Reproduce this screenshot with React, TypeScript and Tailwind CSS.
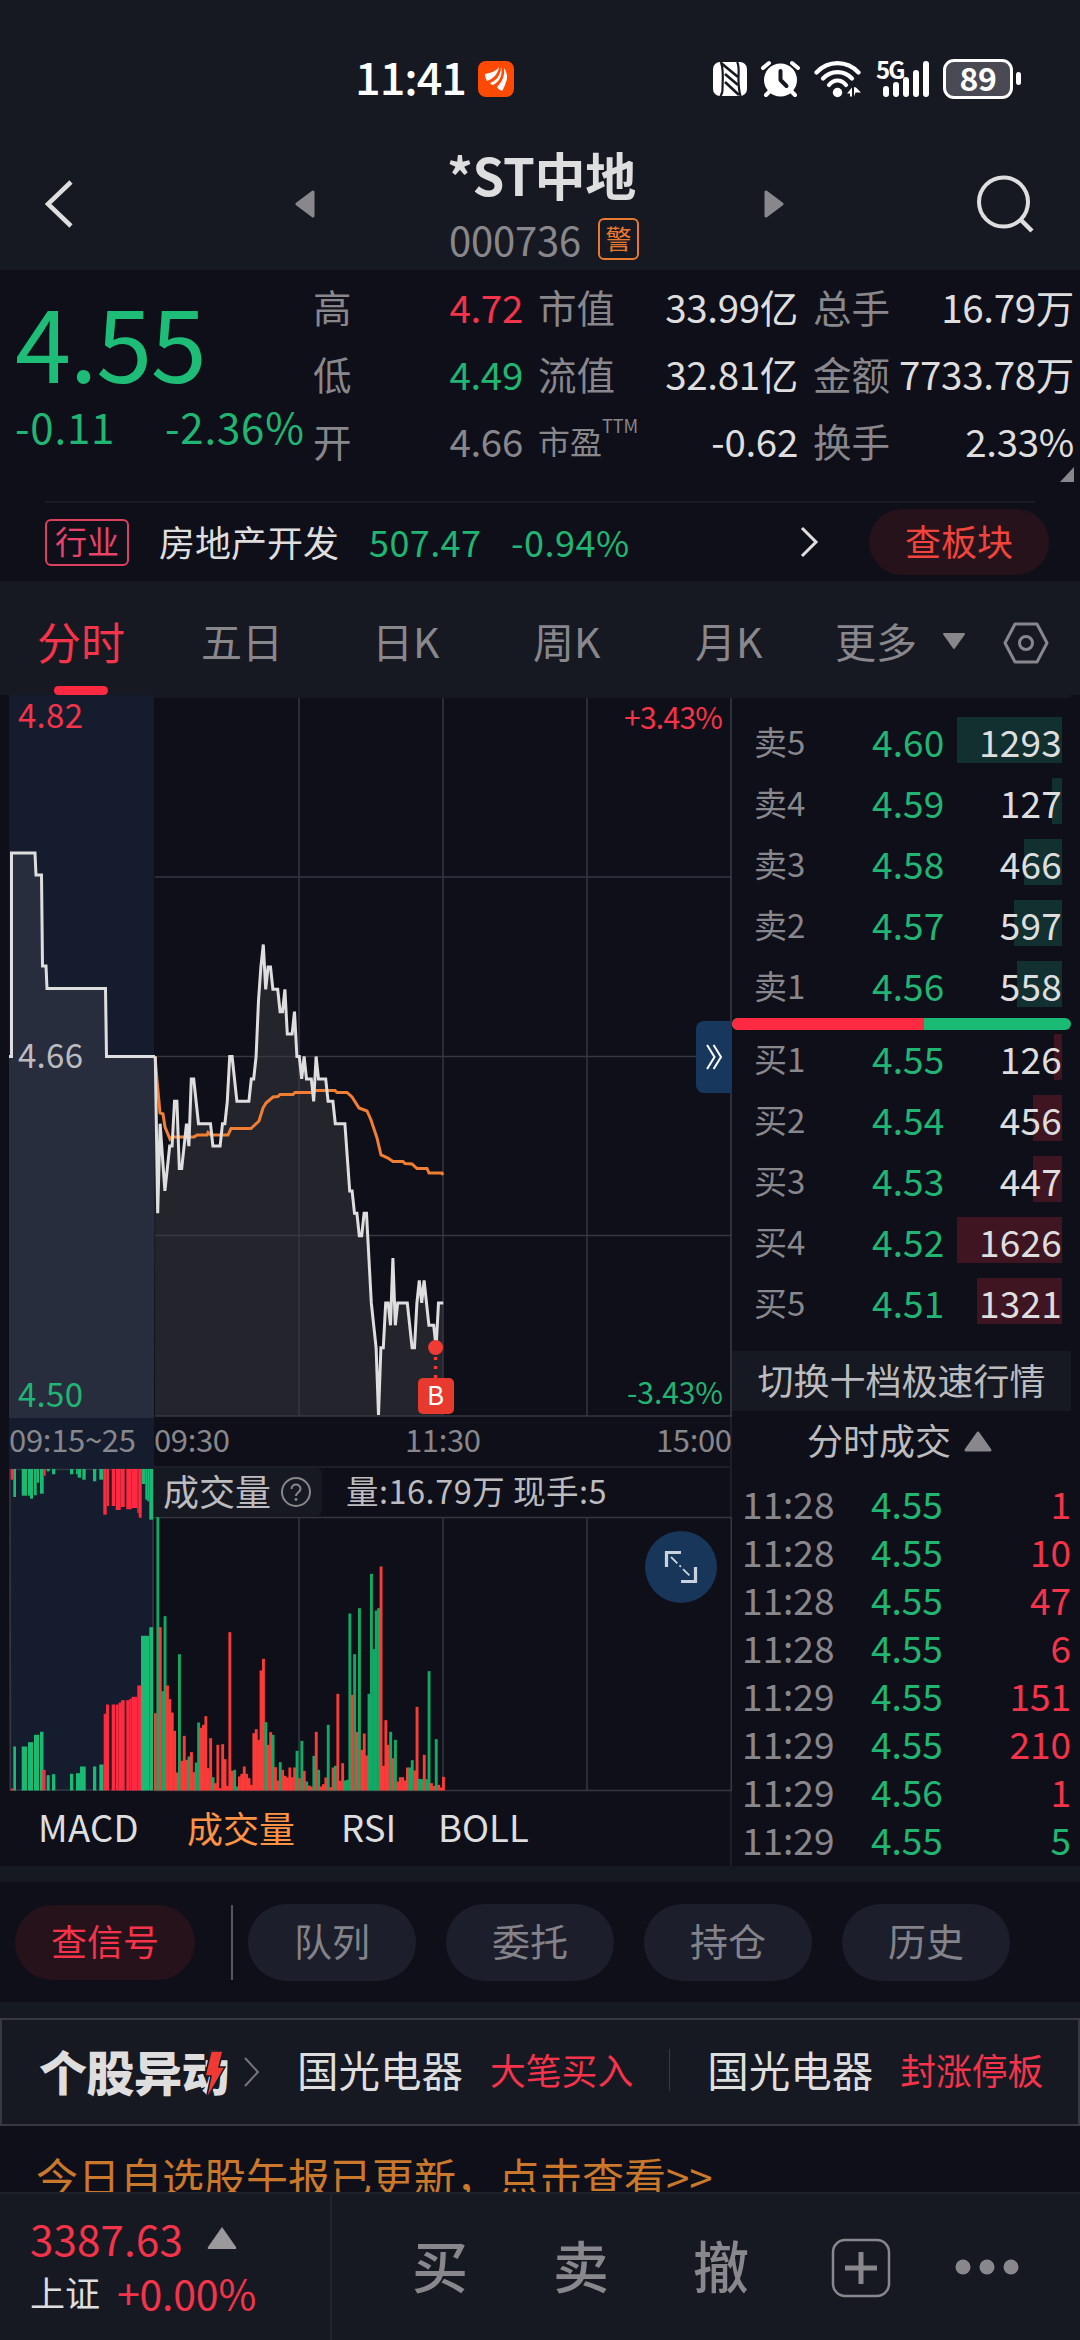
import type { ReactNode } from "react";

const UP = "#f5334a";
const DOWN = "#21b573";

// [minute, price in cents], minute 0 is 09:30
const PRICES: [number, number][] = [
  [0, 466], [1, 459], [2, 463], [4, 460], [6, 462], [7, 462], [8, 464], [9, 464], [10, 461], [11, 461],
  [13, 463], [14, 462], [15, 465], [16, 465], [18, 463], [23, 463], [24, 462], [27, 462], [28, 463], [29, 463],
  [30, 464], [31, 466], [32, 466], [34, 464], [39, 464], [40, 465], [41, 465], [42, 466], [43, 468.5], [44, 470],
  [45, 471], [46, 469], [47, 470], [48, 470], [49, 469], [51, 469], [52, 468], [53, 468], [54, 469], [55, 467],
  [57, 467], [58, 468], [59, 466], [60, 466], [61, 465], [62, 466], [63, 465], [65, 465], [66, 464], [67, 466],
  [68, 465], [71, 465], [72, 464], [74, 464], [75, 463], [79, 463], [81, 460], [82, 460], [83, 459], [84, 459],
  [85, 458], [86, 458], [87, 459], [88, 459], [90, 455], [92, 453], [93, 450], [94, 453], [95, 453], [96, 455],
  [97, 455], [98, 454], [99, 457], [100, 454], [101, 455], [105, 455], [107, 453], [108, 453], [109, 455],
  [110, 456], [111, 455], [112, 456], [114, 454], [116, 454], [117, 453], [118, 455], [120, 455],
];

const AVERAGE: [number, number][] = [
  [155, 1056], [157, 1080], [160, 1113], [163, 1114], [165, 1127], [170, 1139], [172, 1137], [194, 1137], [197, 1135],
  [207, 1135], [208, 1132.5], [211, 1135], [228, 1135], [231, 1128.5], [251, 1128.5], [259, 1121], [263, 1108],
  [266, 1103], [273, 1097], [278, 1096.5], [280, 1094.5], [293, 1094.5], [295, 1092.5], [312, 1092.5], [316, 1090.5],
  [335, 1090.5], [337, 1092.5], [347, 1092.5], [352, 1097], [359, 1108], [367, 1111], [371, 1120], [377, 1138],
  [381, 1155], [388, 1158], [393, 1161.5], [403, 1161.5], [405, 1163.5], [412, 1164], [417, 1168.5], [427, 1168.5],
  [429, 1173], [442, 1173], [443, 1175],
];

// one bar per minute, negative means the price fell
const VOLUMES = [
  232, -820, 490, -298, -523, 315, 274, 234, 179, 54, -409, 89, 164, 92, -102, 115, 55, -84, -204, 188, 197, 223, 67,
  157, -40, 22, 137, 7, 139, 94, 14, 475, 59, -62, -12, 42, 50, 72, 50, 37, 17, 172, 184, 152, 360, 395, -205, 137,
  175, -167, 70, 30, -85, 62, 44, 39, 69, 40, 69, -119, 37, -149, 59, -27, 15, 12, -104, 176, -62, 12, 19, 39, -197,
  10, 69, -74, 290, 29, 82, -30, -32, -531, 287, -409, 176, -547, 122, 171, 105, -290, -650, -424, -540, -547, 672,
  74, 211, 137, -176, 97, -152, 27, 40, 40, 30, 69, -69, -91, 60, 251, -35, -34, 107, -34, -358, 22, 14, -154, 17, 9,
  41,
];

// call auction: [x, width, height], negative height is green
const AUCTION_MATCHED: [number, number, number][] = [
  [10.7, 2.6, 2], [13.3, 2.7, -44], [21.7, 5.3, -44], [28, 5, -48.3], [34, 5, -55.7], [40, 3.5, -58.7],
  [42.3, 3.3, 20.7], [46.7, 3, -15.3], [52, 3.3, -16.3], [70, 3.3, -16.7], [76, 4, -17.3], [80, 5.7, -24],
  [93, 3.3, -24], [99.3, 4.3, -26], [103.7, 2.3, 76.7], [106, 3, 86], [111.7, 3.3, 86], [115.7, 3, 86],
  [118.7, 2.3, 88], [121, 3.7, 90.3], [126.3, 3, 90.3], [129.3, 2.4, 91.7], [131.7, 5.6, 93.7], [137.3, 3.7, 105],
  [141, 8.3, -154.7], [149.3, 3.7, -163.3],
];
const AUCTION_UNMATCHED: [number, number, number][] = [
  [10.7, 2.6, 10.7], [13.3, 2.7, -28], [21.7, 5.3, -26.7], [28, 2, -26.7], [30, 3, -29.7], [34, 2.7, -26.3],
  [36.7, 2.3, -13.7], [40, 3.7, -24.7], [43.7, 2, 6.7], [46.7, 3, -2.3], [52, 3.3, -5.3], [70, 3.3, -5.3],
  [76, 1.7, -5.3], [77.7, 3.3, -8.7], [82.3, 3.4, -10.7], [93, 3.3, -12.3], [99.3, 4, -10.7], [103.3, 3.4, 45.7],
  [106.7, 2.3, 37], [111.7, 3.3, 37], [115.7, 5, 41], [120.7, 4, 38], [126.3, 5.4, 40.3], [131.7, 5.6, 39],
  [137.3, 1.4, 44], [138.7, 3, 48.7], [141.7, 3.6, -15], [145.3, 2, -30.7], [147.3, 2, -32.3], [149.3, 3.7, -50.7],
];

const SELLS = [
  { label: "卖5", price: "4.60", qty: 1293, bar: 105 },
  { label: "卖4", price: "4.59", qty: 127, bar: 10 },
  { label: "卖3", price: "4.58", qty: 466, bar: 38 },
  { label: "卖2", price: "4.57", qty: 597, bar: 48 },
  { label: "卖1", price: "4.56", qty: 558, bar: 45 },
];
const BUYS = [
  { label: "买1", price: "4.55", qty: 126, bar: 8 },
  { label: "买2", price: "4.54", qty: 456, bar: 29 },
  { label: "买3", price: "4.53", qty: 447, bar: 29 },
  { label: "买4", price: "4.52", qty: 1626, bar: 105 },
  { label: "买5", price: "4.51", qty: 1321, bar: 85 },
];
const TICKS = [
  ["11:28", "4.55", "1"],
  ["11:28", "4.55", "10"],
  ["11:28", "4.55", "47"],
  ["11:28", "4.55", "6"],
  ["11:29", "4.55", "151"],
  ["11:29", "4.55", "210"],
  ["11:29", "4.56", "1"],
  ["11:29", "4.55", "5"],
];

function StatusBar() {
  return (
    <div className="flex h-[105px] items-start pt-[58px] text-white">
      <span className="-mt-[1px] ml-[355px] w-[123px] text-[45px] font-medium leading-[38px] tracking-[-1px]">11:41</span>
      <svg className="mt-[3px]" width="36" height="36" viewBox="0 0 36 36">
        <rect width="36" height="36" rx="8" fill="#ff4a05" />
        <path d="M7 13c6-1 11-3 14-7-1 7-6 12-12 14-1-2-2-4-2-7z" fill="#fff" />
        <path d="M23 6c0 8-5 14-11 16 1 1 2 2 3 2 7-4 10-10 8-18z" fill="#fff" />
        <path d="M26 7c3 4 4 10 2 14-1 3-2 6-4 9-2-1-4-2-5-4 5-5 8-11 7-19z" fill="#fff" />
      </svg>
      <svg className="ml-[199px] mt-[4px]" width="34" height="34" viewBox="0 0 34 34">
        <rect width="34" height="34" rx="7" fill="#fff" />
        <path d="M8 0c3 9 1.500 17 1.500 28 0 3-1 4-2 6M24 0c2.500 3 1.500 9 1.500 17 0 8 .5 12 2 17" fill="none" stroke="#171922" strokeWidth="2.200" />
        <path d="M8 1l17 14M12 12l13 11M12 20l14 13" stroke="#171922" strokeWidth="2.600" />
      </svg>
      <svg className="ml-[14px] mt-[2px]" width="39" height="38" viewBox="0 0 39 38">
        <circle cx="19.500" cy="20" r="16.500" fill="#fff" />
        <path d="M2 8l6-5M37 8l-6-5M9 31l-4 4M30 31l4 4" stroke="#fff" strokeWidth="4" strokeLinecap="round" />
        <path d="M19.500 11v9l6 6" stroke="#171922" strokeWidth="4" fill="none" strokeLinecap="round" strokeLinejoin="round" />
      </svg>
      <svg className="ml-[14px] mt-[2px]" width="48" height="38" viewBox="0 0 48 38">
        <g fill="none" stroke="#fff" strokeWidth="4.200" strokeLinecap="round">
          <path d="M2.500 12.500C14 0 33 0 44.500 12.500" />
          <path d="M9 18.500C17 10 30 10 38 18.500" />
          <path d="M15 25C20 19 27 19 32 25" />
        </g>
        <circle cx="23.500" cy="32.500" r="4.700" fill="#fff" />
        <path d="M33 33.500l5-6v9h-2v-3zM40 27v9.500l1.500-4H47l-5-5z" fill="#fff" />
      </svg>
      <div className="relative ml-[14px] h-[40px] w-[54px]">
        <span className="absolute left-0 top-[1px] text-[24px] font-bold leading-[20px] tracking-[-2px]">5G</span>
        <svg className="absolute left-[7px] top-[3px]" width="47" height="36" viewBox="0 0 47 36">
          <g fill="#fff">
            <rect x="0" y="25" width="6" height="11" rx="3" />
            <rect x="10" y="21" width="6" height="15" rx="3" />
            <rect x="20" y="16" width="6" height="20" rx="3" />
            <rect x="30" y="9" width="6" height="27" rx="3" />
            <rect x="40" y="0" width="6" height="36" rx="3" />
          </g>
        </svg>
      </div>
      <div className="ml-[13px] mt-[1px] flex h-[40px] w-[70px] items-center justify-center rounded-[11px] border-[3px] border-white bg-[#4a4a55] pb-[4px] text-[32px] font-bold leading-none tracking-[-0.5px]">
        89
      </div>
      <div className="ml-[3px] mt-[14px] h-[13px] w-[5px] rounded-full bg-white" />
    </div>
  );
}

function Header() {
  return (
    <div className="flex h-[165px] items-start">
      <svg className="ml-[44px] mt-[75px]" width="30" height="48" viewBox="0 0 30 48">
        <path d="M27 2L4 24l23 22" fill="none" stroke="#dededf" strokeWidth="4.500" />
      </svg>
      <svg className="ml-[221px] mt-[85px]" width="20" height="28" viewBox="0 0 20 28">
        <path d="M18 2v24L2 14z" fill="#88878c" stroke="#88878c" strokeWidth="3" strokeLinejoin="round" />
      </svg>
      <div className="ml-[105px] w-[260px]">
        <div className="mt-[39px] pl-[27px] text-[51px] font-bold leading-[60px] tracking-[-0.3px] text-[#dededf]">*ST中地</div>
        <div className="mt-[11px] flex items-center pl-[29px]">
          <span className="w-[149px] text-left text-[40px] leading-[48px] text-[#88878c] tracking-[-0.2px]">000736</span>
          <span className="flex h-[42px] w-[41px] items-center justify-center rounded-[6px] border-2 border-[#e8792e] pb-[3px] text-[26px] leading-none text-[#e8792e]">
            警
          </span>
        </div>
      </div>
      <svg className="ml-[84px] mt-[85px]" width="20" height="28" viewBox="0 0 20 28">
        <path d="M2 2v24L18 14z" fill="#88878c" stroke="#88878c" strokeWidth="3" strokeLinejoin="round" />
      </svg>
      <svg className="ml-[190px] mt-[68px]" width="62" height="62" viewBox="0 0 62 62">
        <circle cx="29.500" cy="29" r="24.500" fill="none" stroke="#dededf" strokeWidth="4" />
        <path d="M46 46l12 12" stroke="#dededf" strokeWidth="4.500" />
      </svg>
    </div>
  );
}

function QuoteCell({ label, value, color = "text-[#dededf]" }: { label: ReactNode; value: string; color?: string }) {
  return (
    <div className="flex h-[67px] items-center justify-between whitespace-nowrap">
      <span className="text-[38.5px] leading-[67px] text-[#88878c]">{label}</span>
      <span className={`text-[38.5px] leading-[67px] tracking-[-0.3px] ${color}`}>{value}</span>
    </div>
  );
}

function Quote() {
  return (
    <div className="relative flex h-[231px] pt-[3px]">
      <div className="w-[313px] pl-[15px] text-[#21b573]">
        <div className="mt-[19px] text-[101px] leading-[94px] tracking-[-1.5px] text-[#1dbd77]">4.55</div>
        <div className="mt-[16px] flex text-[42px] leading-[48px] tracking-[0.8px]">
          <span className="w-[150px]">-0.11</span>
          <span>-2.36%</span>
        </div>
      </div>
      <div className="w-[210px]">
        <QuoteCell label="高" value="4.72" color="text-[#f5334a]" />
        <QuoteCell label="低" value="4.49" color="text-[#21b573]" />
        <QuoteCell label="开" value="4.66" color="text-[#88878c]" />
      </div>
      <div className="ml-[15px] w-[260px]">
        <QuoteCell label="市值" value="33.99亿" />
        <QuoteCell label="流值" value="32.81亿" />
        <QuoteCell
          label={
            <span className="flex text-[32px]">
              市盈<span className="-mt-[15px] text-[18px]">TTM</span>
            </span>
          }
          value="-0.62"
        />
      </div>
      <div className="ml-[15px] w-[261px]">
        <QuoteCell label="总手" value="16.79万" />
        <QuoteCell label="金额" value="7733.78万" />
        <QuoteCell label="换手" value="2.33%" />
      </div>
      <svg className="absolute left-[1060px] top-[197px]" width="14" height="15">
        <path d="M14 0v15H0z" fill="#88878c" />
      </svg>
    </div>
  );
}

function Industry() {
  return (
    <div className="mx-[45px] flex h-[80px] items-center border-t-2 border-[#191b24] text-[36px] leading-none">
      <span className="flex h-[47px] w-[84px] shrink-0 items-center justify-center rounded-[6px] border-2 border-[#d9415f] pb-[4px] text-[32px] text-[#e8446a]">
        行业
      </span>
      <span className="-mt-[3px] ml-[30px] w-[210px] shrink-0">
        <span className="text-[#dededf]">房地产开发</span>
      </span>
      <span className="-mt-[2px] w-[142px] shrink-0 tracking-[0.4px] text-[#21b573]">507.47</span>
      <span className="-mt-[2px] w-[276px] shrink-0 tracking-[0.5px] text-[#21b573]">-0.94%</span>
      <svg className="ml-[12px] mr-[50px] shrink-0" width="20" height="32" viewBox="0 0 20 32">
        <path d="M3 2l14 14L3 30" fill="none" stroke="#dededf" strokeWidth="3" />
      </svg>
      <span className="-mr-[15px] flex h-[66px] w-[180px] shrink-0 items-center justify-center rounded-full bg-[#26121b] pb-[4px] text-[#f0443c]">
        查板块
      </span>
    </div>
  );
}

function PeriodTabs() {
  return (
    <div className="relative flex h-[114px] items-center bg-[#171922] pt-[5px] text-[41px] leading-none text-[#88878c]">
      <span className="ml-[37px] w-[164px] text-[44px] text-[#f5334a]">分时</span>
      <span className="w-[171px]">五日</span>
      <span className="w-[161px]">日K</span>
      <span className="w-[162px]">周K</span>
      <span className="w-[140px]">月K</span>
      <span className="w-[107px]">更多</span>
      <svg className="mt-[1px]" width="24" height="18" viewBox="0 0 24 18">
        <path d="M2 2h20L12 16z" fill="#88878c" stroke="#88878c" strokeWidth="2" strokeLinejoin="round" />
      </svg>
      <svg className="ml-[36px] mt-[4px]" width="48" height="44" viewBox="0 0 48 44">
        <path d="M13 3h22l10 19-10 19H13L3 22z" fill="none" stroke="#88878c" strokeWidth="3" strokeLinejoin="round" />
        <circle cx="24" cy="22" r="6.500" fill="none" stroke="#88878c" strokeWidth="3" />
      </svg>
      <div className="absolute bottom-0 left-[54px] h-[9px] w-[54px] rounded-full bg-[#ff2a41]" />
    </div>
  );
}

function PriceChart() {
  const line = PRICES.map(([m, p]) => `${155.3 + m * 2.4},${1056.5 - (p - 466) * 22.4}`).join(" ");
  const auction = "9,1056.5 11.500,1056.5 11.500,853 35,853 36,875 41.500,875 42.500,966 46,966 47,988.5 105.500,988.5 106.500,1056.5 155,1056.5";
  return (
    <svg className="block" width="732" height="773" viewBox="0 695 732 773">
      <rect x="9" y="695" width="145" height="773" fill="#151c2d" />
      <rect x="154" y="695" width="578" height="3" fill="#171922" />
      <polygon points={`${auction} 154,1418 9,1418`} fill="#282d3e" />
      <rect x="9" y="1056" width="145" height="361.5" fill="#282d3e" />
      <polygon points={`${line} 443,1416 155,1416`} fill="#24242d" />
      <g stroke="#363741" strokeWidth="1.500">
        <path d="M299 698v718M443 698v718M587 698v718M731 698v718" />
        <path d="M155 877h577M155 1056.5h577M155 1235.5h577M155 1416h577" />
      </g>
      <path d="M154 1467h578" stroke="#1c1e28" strokeWidth="2" />
      <polyline points={AVERAGE.map((p) => p.join(",")).join(" ")} fill="none" stroke="#f07f33" strokeWidth="3" />
      <polyline points={auction} fill="none" stroke="#dededf" strokeWidth="3" />
      <polyline points={line} fill="none" stroke="#dededf" strokeWidth="3" />
      <path d="M435.600 1357v22" stroke="#f03a33" strokeWidth="3.500" strokeDasharray="3 6" />
      <circle cx="435.600" cy="1347.500" r="7.500" fill="#f03a33" />
      <rect x="418" y="1378" width="36" height="36" rx="5" fill="#e8392f" />
      <g fontSize="33">
        <text x="18" y="728" fill={UP} textLength="65">4.82</text>
        <text x="18" y="1068" fill="#bcbcbf" textLength="65">4.66</text>
        <text x="18" y="1407" fill={DOWN} textLength="65">4.50</text>
      </g>
      <text x="435.600" y="1405" textAnchor="middle" fontSize="26" fill="#fff">B</text>
      <g fontSize="30" textAnchor="end">
        <text x="723" y="729" fill={UP} textLength="99">+3.43%</text>
        <text x="723" y="1404" fill={DOWN} textLength="96">-3.43%</text>
      </g>
      <g fontSize="31" fill="#88878c">
        <text x="9" y="1452" textLength="127">09:15~25</text>
        <text x="154" y="1452" textLength="76">09:30</text>
        <text x="405" y="1452" textLength="76">11:30</text>
        <text x="656" y="1452" textLength="76">15:00</text>
      </g>
    </svg>
  );
}

function VolumeChart() {
  return (
    <div className="relative h-[324px]">
      <svg className="block" width="732" height="324" viewBox="0 1468 732 324">
        <rect x="9" y="1468" width="145" height="323" fill="#151c2d" />
        <path d="M10 1469.5h143V1790H10.500z" fill="none" stroke="#363741" strokeWidth="1.500" />
        <path d="M154 1517.5h577.500V1790.500H154M299 1517v273M443 1517v273M587 1517v273" fill="none" stroke="#363741" strokeWidth="1.500" />
        {AUCTION_MATCHED.map(([x, w, h], i) => (
          <rect key={i} x={x} y={1790.5 - Math.abs(h)} width={w} height={Math.abs(h)} fill={h < 0 ? "#19bb74" : "#ff2a41"} />
        ))}
        {AUCTION_UNMATCHED.map(([x, w, h], i) => (
          <rect key={i} x={x} y={1469} width={w} height={Math.abs(h)} fill={h < 0 ? "#19bb74" : "#ff2a41"} />
        ))}
        {VOLUMES.map((v, i) => (
          <rect
            key={i}
            x={154 + i * 2.4}
            y={1790.5 - Math.abs(v) / 3}
            width={2.9}
            height={Math.abs(v) / 3}
            fill={v < 0 ? "#12a964" : "#f93c3a"}
          />
        ))}
      </svg>
      <div className="absolute left-[155px] top-0 flex h-[48px] items-center whitespace-nowrap text-[#bcbcbf]">
        <div className="flex h-[48px] w-[167px] items-center rounded-r-[6px] bg-[#171922] pl-[8px] text-[36px] leading-none">
          <span className="-mt-[4px]">成交量</span>
          <svg className="ml-[9px]" width="32" height="32" viewBox="0 0 32 32">
            <circle cx="16" cy="16" r="14" fill="none" stroke="#88878c" strokeWidth="2" />
            <path d="M11.500 13c0-6 9-6 9 0 0 3-4.500 3.500-4.500 7" fill="none" stroke="#88878c" strokeWidth="2" />
            <circle cx="16" cy="23.500" r="1.400" fill="#88878c" />
          </svg>
        </div>
        <span className="-mt-[4px] ml-[24px] text-[32.5px] leading-none tracking-[0.5px]">量:16.79万 现手:5</span>
      </div>
      <div className="absolute left-[645px] top-[63px] flex h-[72px] w-[72px] items-center justify-center rounded-full bg-[#18365a]">
        <svg width="34" height="34" viewBox="0 0 34 34" fill="none" stroke="#c9d2dd">
          <path d="M2.500 17V2.500H17M31.500 17v14.500H17" strokeWidth="3.200" />
          <path d="M7 7l20 20" strokeWidth="1.800" strokeDasharray="9 3 2 3" />
        </svg>
      </div>
    </div>
  );
}

function BookRow({ row, tint }: { row: (typeof SELLS)[number]; tint: string }) {
  return (
    <div className="relative flex h-[61px] items-center pb-[4px]">
      <div className={`absolute right-[18px] top-[5px] h-[46px] ${tint}`} style={{ width: row.bar }} />
      <span className="ml-[22px] w-[118px] text-[33px] leading-[56px] text-[#88878c]">{row.label}</span>
      <span className="text-[37px] leading-[56px] tracking-[0.1px] text-[#21b573]">{row.price}</span>
      <span className="relative ml-auto mr-[18px] text-[37px] leading-[56px] tracking-[0.2px] text-[#dededf]">{row.qty}</span>
    </div>
  );
}

function SidePanel() {
  return (
    <div className="w-[348px]">
      <div className="h-[3px] w-[339px] bg-[#171922]" />
      <div className="mt-[14px]">
        {SELLS.map((row) => (
          <BookRow key={row.label} row={row} tint="bg-[#12302f]" />
        ))}
      </div>
      <div className="mt-[1px] flex h-[12px] w-[339px] overflow-hidden rounded-full bg-[#19bb74]">
        <div className="w-[192px] bg-[#ff2a41]" />
      </div>
      <div className="-mt-[1px]">
        {BUYS.map((row) => (
          <BookRow key={row.label} row={row} tint="bg-[#3f1522]" />
        ))}
      </div>
      <div className="mt-[17px] flex h-[60px] w-[339px] items-center justify-center bg-[#171922] pb-[4px] text-[36px] leading-none text-[#bcbcbf]">
        切换十档极速行情
      </div>
      <div className="flex h-[56px] items-center pl-[75px] text-[36px] leading-none text-[#bcbcbf]">
        分时成交
        <svg className="ml-[13px] mt-[4px]" width="28" height="21" viewBox="0 0 28 21">
          <path d="M14 2l12 17H2z" fill="#88878c" stroke="#88878c" strokeWidth="3" strokeLinejoin="round" />
        </svg>
      </div>
      <div className="mt-[12px]">
        {TICKS.map(([time, price, qty], i) => (
          <div key={i} className="flex h-[48px] items-center text-[37px] leading-none">
            <span className="w-[139px] pl-[10px] text-[#88878c]">{time}</span>
            <span className="text-[#21b573]">{price}</span>
            <span className={`ml-auto mr-[9px] ${i === 7 ? "text-[#21b573]" : "text-[#f5334a]"}`}>{qty}</span>
          </div>
        ))}
      </div>
    </div>
  );
}

function Actions() {
  return (
    <div className="border-y-[16px] border-[#171922]">
      <div className="flex h-[120px] items-center text-[38px] leading-none text-[#84838a]">
        <span className="ml-[15px] flex h-[75px] w-[180px] items-center justify-center rounded-full bg-[#26121b] pb-[4px] text-[36px] text-[#f5334a]">
          查信号
        </span>
        <div className="ml-[36px] mr-[15px] h-[75px] w-[2px] bg-[#55555d]" />
        <div className="flex gap-[30px]">
          {["队列", "委托", "持仓", "历史"].map((name) => (
            <span key={name} className="flex h-[77px] w-[168px] items-center justify-center rounded-full bg-[#1c1e2b] pb-[4px]">
              {name}
            </span>
          ))}
        </div>
      </div>
    </div>
  );
}

function Movers() {
  return (
    <div className="flex h-[108px] items-center whitespace-nowrap border-2 border-[#373842] bg-[#171922] pb-[5px] text-[41.500px] leading-none text-[#dededf]">
      <span className="relative ml-[37px] w-[198px] text-[48px] font-black tracking-[-0.5px]">
        个股异动
        <svg className="absolute left-[163px] top-[4px]" width="24" height="50" viewBox="0 0 24 50">
          <path d="M9 1h12l-4 16h6L4 50l5-24H3z" fill="#f03a33" stroke="#171922" strokeWidth="1.500" />
        </svg>
      </span>
      <svg className="ml-[6px] mt-[4px]" width="18" height="32" viewBox="0 0 18 32">
        <path d="M2 2l13 14L2 30" fill="none" stroke="#77767c" strokeWidth="2" />
      </svg>
      <span className="ml-[36px]">国光电器</span>
      <span className="ml-[27px] text-[35.8px] text-[#f5334a]">大笔买入</span>
      <div className="ml-[36px] mr-[37px] h-[42px] w-px bg-[#373842]" />
      <span>国光电器</span>
      <span className="ml-[27px] text-[35.8px] text-[#f5334a]">封涨停板</span>
    </div>
  );
}

function BottomBar() {
  return (
    <div className="relative flex h-[149px] items-center border-t-2 border-[#20232c] bg-[#171922]">
      <div className="h-full w-[332px] border-r-2 border-[#20232c] pl-[30px] pt-[20px]">
        <div className="flex items-center text-[42px] leading-[48px] tracking-[0.2px] text-[#f5334a]">
          3387.63
          <svg className="ml-[23px]" width="32" height="22" viewBox="0 0 32 22">
            <path d="M16 0l14 20q1 2-1 2H3q-2 0-1-2z" fill="#9a999c" />
          </svg>
        </div>
        <div className="mt-[6px] flex items-center leading-[48px]">
          <span className="w-[87px] text-[35px] text-[#dededf]">上证</span>
          <span className="text-[41px] tracking-[-0.2px] text-[#f5334a]">+0.00%</span>
        </div>
      </div>
      <div className="flex items-center pb-[4px] pl-[80px] text-[56px] font-medium leading-none text-[#88878c]">
        <span className="-mt-[4px] w-[141px]">买</span>
        <span className="-mt-[4px] w-[140px]">卖</span>
        <span className="-mt-[4px] w-[138px]">撤</span>
        <svg className="mt-[4px]" width="60" height="60" viewBox="0 0 60 60" fill="none" stroke="#88878c">
          <rect x="2" y="2" width="56" height="56" rx="12" strokeWidth="2.500" />
          <path d="M14 30h32M30 14v32" strokeWidth="5" />
        </svg>
        <svg className="ml-[63px] mt-[2px]" width="66" height="16" viewBox="0 0 66 16" fill="#88878c">
          <circle cx="9" cy="8" r="7.500" />
          <circle cx="33" cy="8" r="7.500" />
          <circle cx="57" cy="8" r="7.500" />
        </svg>
      </div>
    </div>
  );
}

export default function App() {
  return (
    <div className="h-[2340px] w-[1080px] overflow-hidden bg-[#0f0f19] font-['Noto_Sans_CJK_SC',sans-serif]">
      <div className="bg-[#171922]">
        <StatusBar />
        <Header />
      </div>
      <Quote />
      <Industry />
      <PeriodTabs />
      <div className="flex h-[1171px]">
        <div className="relative w-[732px] border-r-2 border-[#1c1e28]">
          <PriceChart />
          <VolumeChart />
          <div className="flex h-[70px] items-center text-[36.500px] leading-none text-[#dededf]">
            <span className="ml-[38px] w-[149px] tracking-[0.3px]">MACD</span>
            <span className="w-[154px] text-[36px] text-[#ff9344]">成交量</span>
            <span className="w-[97px]">RSI</span>
            <span>BOLL</span>
          </div>
          <div className="absolute left-[696px] top-[326px] flex h-[72px] w-[36px] items-center justify-center rounded-l-[8px] bg-[#17375c]">
            <svg width="19" height="26" viewBox="0 0 20 28" fill="none" stroke="#fff" strokeWidth="2.200">
              <path d="M2 1l8 13-8 13M9 1l8 13-8 13" />
            </svg>
          </div>
        </div>
        <SidePanel />
      </div>
      <Actions />
      <Movers />
      <div className="h-[66px] overflow-hidden whitespace-nowrap pl-[36px] pt-[22px] text-[42px] leading-[56px] text-[#c9782c]">
        今日自选股午报已更新，点击查看&gt;&gt;
      </div>
      <BottomBar />
    </div>
  );
}
